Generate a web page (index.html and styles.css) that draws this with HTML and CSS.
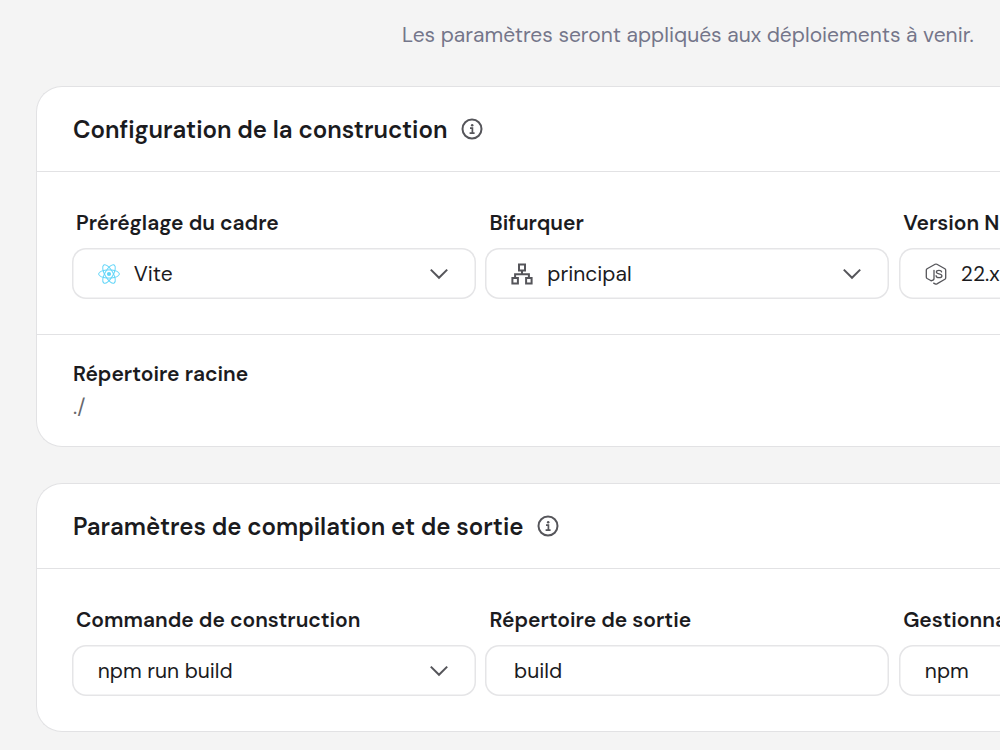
FILE: index.html
```html
<!DOCTYPE html>
<html lang="fr">
<head>
<meta charset="utf-8">
<title>Paramètres</title>
<link rel="stylesheet" href="styles.css">
</head>
<body>
<svg class="defs" aria-hidden="true">
  <symbol id="info" viewBox="0 0 22 22"><circle cx="11" cy="11" r="9.5" fill="none" stroke="currentColor" stroke-width="2"/><circle cx="11.2" cy="7.3" r="1.25" fill="currentColor"/><path d="M9 10.1h2.4v5M8.6 15.1h5" fill="none" stroke="currentColor" stroke-width="1.7"/></symbol>
  <symbol id="chevron" viewBox="0 0 20 12"><path d="M1.8 1.6 10 9.8l8.2-8.2" fill="none" stroke="currentColor" stroke-width="2"/></symbol>
</svg>
<main class="page">
  <p class="notice">Les paramètres seront appliqués aux déploiements à venir.</p>
  <section class="card">
    <header class="card-head"><h2>Configuration de la construction</h2><svg class="info"><use href="#info"/></svg></header>
    <div class="fields">
      <div class="field"><span class="label">Préréglage du cadre</span>
        <div class="control"><svg class="icon" viewBox="0 0 22 22" fill="none" stroke="#61d5f8" stroke-width="1"><circle cx="11" cy="11" r="2.1" fill="#61d5f8" stroke="none"/><ellipse cx="11" cy="11" rx="10.4" ry="4.1"/><ellipse cx="11" cy="11" rx="10.4" ry="4.1" transform="rotate(60 11 11)"/><ellipse cx="11" cy="11" rx="10.4" ry="4.1" transform="rotate(120 11 11)"/></svg><span class="value">Vite</span><svg class="chevron"><use href="#chevron"/></svg></div>
      </div>
      <div class="field"><span class="label">Bifurquer</span>
        <div class="control"><svg class="icon" viewBox="0 0 22 22" fill="none" stroke="currentColor" stroke-width="2"><path d="M8 1.4h6v6H8zM1.4 15h5.5v5.5H1.4zM15.1 15h5.5v5.5h-5.5zM11 7.4v3.8M4.1 15v-3.8h13.8V15"/></svg><span class="value">principal</span><svg class="chevron"><use href="#chevron"/></svg></div>
      </div>
      <div class="field"><span class="label">Version N</span>
        <div class="control"><svg class="icon" viewBox="0 0 22 22" fill="none" stroke="currentColor" stroke-width="1.3" stroke-linecap="round" stroke-linejoin="round"><path d="M6.2 17.7 2.1 15.5Q1.3 15 1.3 14V7.3q0-1 .8-1.5l8-4.500q.9-.5 1.800 0l8 4.500q.8.500.8 1.500V14.700q0 1-.8 1.500l-8 4.700q-.9.500-1.800 0l-1.400-.8"/><path d="M9 7.300v8.200q0 2-2.800 2.200M16.600 8.800c-.2-1.200-1.300-1.500-2.600-1.500-1.600 0-2.600.6-2.600 1.700 0 2.800 5.500.8 5.500 3.900 0 1.200-1.100 1.800-2.800 1.800s-2.900-.6-3-2"/></svg><span class="value">22.x</span></div>
      </div>
    </div>
    <div class="root"><span class="label">Répertoire racine</span><span class="path">./</span></div>
  </section>
  <section class="card">
    <header class="card-head"><h2>Paramètres de compilation et de sortie</h2><svg class="info"><use href="#info"/></svg></header>
    <div class="fields">
      <div class="field"><span class="label">Commande de construction</span>
        <div class="control"><span class="value">npm run build</span><svg class="chevron"><use href="#chevron"/></svg></div></div>
      <div class="field"><span class="label">Répertoire de sortie</span>
        <div class="control input"><span class="value">build</span></div></div>
      <div class="field"><span class="label">Gestionnaire</span>
        <div class="control"><span class="value">npm</span></div></div>
    </div>
  </section>
</main>
</body>
</html>
```
FILE: styles.css
```css
* { box-sizing: border-box; }
html, body { height: 100%; overflow: hidden; }
body { margin: 0; background: #f4f4f4; color: #1b1b1e; font-family: "DM Sans", Inter, sans-serif; }
.defs { display: none; }
.page { width: 1000px; height: 750px; padding-left: 36px; overflow: hidden; }
.notice { margin: 0; height: 86px; padding: 20px 0 0 366px; font-size: 21px; line-height: 30px; color: #74768a; white-space: nowrap; }
.card { margin-bottom: 36px; background: #fff; border: 1px solid #e2e2e4; border-right: 0; border-radius: 26px 0 0 26px; }
.card-head { height: 85px; padding-left: 36px; display: flex; align-items: center; gap: 13.5px; border-bottom: 1px solid #e2e2e4; }
h2 { margin: 0; padding-top: 2px; font-size: 24px; line-height: 32px; font-weight: 600; letter-spacing: -0.02px; white-space: nowrap; }
.info { width: 22px; height: 22px; color: #55555a; flex: none; }
.fields { height: 162px; padding: 36px 0 0 34.5px; display: flex; gap: 9.2px; overflow: hidden; }
.field { width: 404.4px; flex: none; }
.label { display: block; padding-left: 4.5px; font-size: 21px; line-height: 30px; font-weight: 600; white-space: nowrap; }
.control { height: 51px; margin-top: 10.3px; padding: 0 27px 0 26.2px; display: flex; align-items: center; border-radius: 14px; border: 0 solid; color: #55555a; background: linear-gradient(#fff, #fff) padding-box; box-shadow: inset 0 0 0 1.5px #e5e5e7; }
.input { padding-left: 29px; }
.icon { width: 22px; height: 22px; margin-right: 14px; flex: none; }
.value { flex: 1; font-size: 21px; line-height: 30px; color: #1b1b1e; white-space: nowrap; }
.chevron { width: 20px; height: 12px; }
.root { height: 112px; padding: 24px 0 0 36px; border-top: 1px solid #e2e2e4; }
.root .label { padding-left: 0; }
.path { display: block; font-size: 21px; line-height: 30px; margin-top: 3px; color: #68686d; }
```
